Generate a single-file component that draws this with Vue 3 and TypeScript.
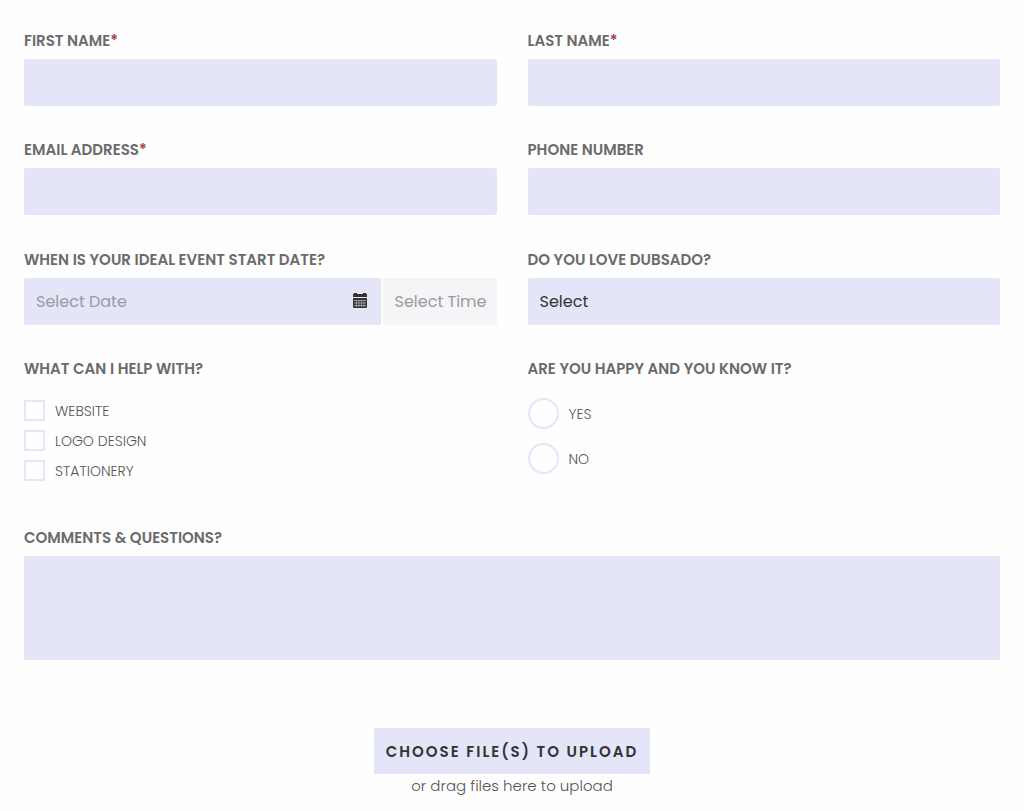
<script setup lang="ts">
import { ref } from 'vue'

interface TextField {
  id: string
  label: string
  type: string
  required: boolean
}

const fields: TextField[] = [
  { id: 'first-name', label: 'FIRST NAME', type: 'text', required: true },
  { id: 'last-name', label: 'LAST NAME', type: 'text', required: true },
  { id: 'email', label: 'EMAIL ADDRESS', type: 'email', required: true },
  { id: 'phone', label: 'PHONE NUMBER', type: 'tel', required: false },
]
const services: string[] = ['WEBSITE', 'LOGO DESIGN', 'STATIONERY']
const answers: string[] = ['YES', 'NO']

const values = ref<Record<string, string>>({})
const date = ref('')
const time = ref('')
const love = ref('')
const chosen = ref<string[]>([])
const happy = ref('')
const comments = ref('')
const picker = ref<HTMLInputElement | null>(null)
</script>

<template>
  <form class="form" @submit.prevent>
    <div class="grid">
      <div v-for="f in fields" :key="f.id" class="field">
        <label class="title" :for="f.id">{{ f.label }}<span v-if="f.required" class="star">*</span></label>
        <input :id="f.id" v-model="values[f.id]" class="box" :type="f.type" :required="f.required" />
      </div>
    </div>

    <div class="grid schedule">
      <div class="field">
        <label class="title" for="date">WHEN IS YOUR IDEAL EVENT START DATE?</label>
        <div class="when">
          <div class="date">
            <input id="date" v-model="date" class="box" type="text" placeholder="Select Date" />
            <svg class="calendar" viewBox="0 0 14 15" aria-hidden="true">
              <path d="M0 1h1V0h3v1h6V0h3v1h1v3H0z" fill="#333" />
              <path d="M0 5h14v9a1 1 0 0 1-1 1H1a1 1 0 0 1-1-1z" fill="#333" />
              <path d="M1 7.500h12M1 10h12M1 12.500h12M3.500 7v7M6 7v7M8.500 7v7M11 7v7" stroke="#b4b4c4" stroke-width=".7" />
            </svg>
          </div>
          <input v-model="time" class="box time" type="text" placeholder="Select Time" aria-label="Select Time" />
        </div>
      </div>
      <div class="field">
        <label class="title" for="love">DO YOU LOVE DUBSADO?</label>
        <select id="love" v-model="love" class="box">
          <option value="">Select</option>
          <option value="yes">Yes</option>
          <option value="no">No</option>
        </select>
      </div>
    </div>

    <div class="grid choices">
      <fieldset>
        <legend class="title">WHAT CAN I HELP WITH?</legend>
        <div class="checks">
          <label v-for="s in services" :key="s" class="option">
            <input v-model="chosen" class="check" type="checkbox" :value="s" />{{ s }}
          </label>
        </div>
      </fieldset>
      <fieldset>
        <legend class="title">ARE YOU HAPPY AND YOU KNOW IT?</legend>
        <div class="radios">
          <label v-for="a in answers" :key="a" class="option">
            <input v-model="happy" class="radio" type="radio" name="happy" :value="a" />{{ a }}
          </label>
        </div>
      </fieldset>
    </div>

    <div class="field comments">
      <label class="title" for="comments">COMMENTS &amp; QUESTIONS?</label>
      <textarea id="comments" v-model="comments" class="box area"></textarea>
    </div>

    <div class="upload">
      <button type="button" class="choose" @click="picker?.click()">CHOOSE FILE(S) TO UPLOAD</button>
      <input ref="picker" type="file" multiple hidden aria-label="Files to upload" />
      <p class="hint">or drag files here to upload</p>
    </div>
  </form>
</template>

<style>
body {
  margin: 0;
  background: #fefefe;
}
</style>

<style scoped>
.form {
  box-sizing: border-box;
  padding: 31px 24px 0;
  font-family: Poppins, Inter, "Open Sans", sans-serif;
  color: #6b6b6b;
}
.grid {
  display: grid;
  grid-template-columns: minmax(0, 1fr) minmax(0, 1fr);
  gap: 34px 31px;
}
.schedule {
  margin-top: 35px;
}
.choices {
  margin-top: 34px;
}
.field {
  display: flex;
  flex-direction: column;
  gap: 8px;
}
.title {
  display: block;
  padding: 0;
  font-size: 15px;
  font-weight: 600;
  line-height: 20px;
}
.star {
  color: #a94442;
}
.box {
  box-sizing: border-box;
  display: block;
  width: 100%;
  height: 47px;
  margin: 0;
  padding: 0 12px;
  border: 0;
  border-radius: 2px;
  background: #e5e5f8;
  color: #333;
  font-family: inherit;
  font-size: 16px;
  font-weight: 400;
  appearance: none;
}
.box::placeholder {
  color: #9b9b9f;
  opacity: 1;
}
.when {
  display: flex;
  gap: 2px;
}
.date {
  position: relative;
  flex: 1;
}
.calendar {
  position: absolute;
  top: 15px;
  right: 14px;
  width: 14px;
  height: 15px;
}
.time {
  flex: none;
  width: 114px;
  padding-right: 8px;
  background: #f5f5f8;
}
fieldset {
  min-width: 0;
  margin: 0;
  padding: 0;
  border: 0;
}
.checks,
.radios {
  display: flex;
  flex-direction: column;
  align-items: flex-start;
}
.checks {
  gap: 9px;
  padding-top: 21px;
}
.radios {
  gap: 14px;
  padding-top: 19px;
}
.option {
  display: flex;
  align-items: center;
  gap: 10px;
  color: #555;
  font-size: 14px;
  font-weight: 300;
  line-height: 20px;
}
.check,
.radio {
  box-sizing: border-box;
  flex: none;
  margin: 0;
  border: 2px solid #e5e5f8;
  background: #fefefe;
  appearance: none;
}
.check {
  width: 21px;
  height: 21px;
}
.radio {
  width: 31px;
  height: 31px;
  border-radius: 50%;
}
.check:checked,
.radio:checked {
  background: #6b6b6b;
  background-clip: content-box;
  padding: 4px;
}
.comments {
  margin-top: 47px;
}
.area {
  height: 104px;
  padding: 12px;
  resize: none;
}
.upload {
  display: flex;
  flex-direction: column;
  align-items: center;
  margin-top: 68px;
}
.choose {
  height: 46px;
  padding: 0 12px;
  border: 0;
  background: #e5e5f8;
  color: #333;
  font-family: inherit;
  font-size: 15px;
  font-weight: 600;
  letter-spacing: 2px;
}
.hint {
  margin: 0;
  color: #555;
  font-size: 15px;
  font-weight: 300;
  line-height: 24px;
}
</style>
